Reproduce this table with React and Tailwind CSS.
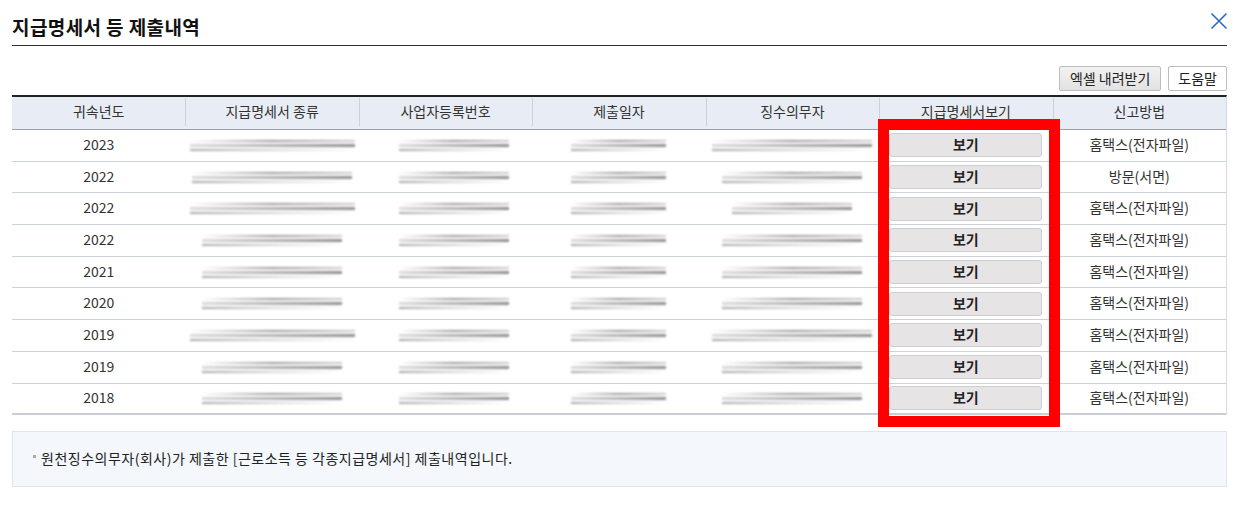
import React from "react";

const rows = [
  ["2023", "홈택스(전자파일)", [165, 110, 95, 160]],
  ["2022", "방문(서면)", [160, 110, 95, 140]],
  ["2022", "홈택스(전자파일)", [165, 110, 95, 120]],
  ["2022", "홈택스(전자파일)", [140, 110, 95, 140]],
  ["2021", "홈택스(전자파일)", [140, 110, 95, 140]],
  ["2020", "홈택스(전자파일)", [140, 110, 95, 140]],
  ["2019", "홈택스(전자파일)", [165, 110, 95, 160]],
  ["2019", "홈택스(전자파일)", [140, 110, 95, 140]],
  ["2018", "홈택스(전자파일)", [140, 110, 95, 140]],
];

function Smudge({ w }) {
  return (
    <div className="flex flex-col gap-[2px] blur-[1px] opacity-85" style={{ width: w }}>
      <div className="h-[2px] bg-gradient-to-r from-transparent via-[#8a8a8a] to-[#c4c4c4]" />
      <div className="h-[3px] bg-gradient-to-r from-[#d6d6d6] via-[#a5a5a5] to-[#7d7d7d]" />
      <div className="h-[2px] bg-gradient-to-r from-[#9a9a9a] via-[#cfcfcf] to-transparent" />
    </div>
  );
}

export default function App() {
  const font = { fontFamily: '"Noto Sans CJK KR", "Noto Sans", sans-serif' };
  return (
    <div className="relative w-[1239px] h-[509px] bg-white text-[#333]" style={font}>
      <div className="px-[12px]">
        <div className="flex items-center justify-between h-[46px] border-b border-[#333]">
          <h1 className="text-[19px] font-bold text-[#111] tracking-[0.4px] pt-[9px]">지급명세서 등 제출내역</h1>
          <svg width="18" height="18" viewBox="0 0 18 18" className="mr-[-1px] mt-[-4px]">
            <path d="M1.5 1.5 L16.5 16.5 M16.5 1.5 L1.5 16.5" stroke="#2b6cc4" strokeWidth="1.6" fill="none" />
          </svg>
        </div>

        <div className="flex justify-end gap-[7px] mt-[20px]">
          <button className="h-[25px] px-[10px] pb-[1px] text-[14px] text-[#222] border border-[#bdbdbd] bg-gradient-to-b from-[#f2f2f2] to-[#e2e2e2] rounded-[2px]">엑셀 내려받기</button>
          <button className="h-[25px] px-[9px] pb-[1px] text-[14px] text-[#222] border border-[#bdbdbd] bg-white rounded-[2px]">도움말</button>
        </div>

        <div className="mt-[4px] border-t-2 border-[#222] border-r border-r-[#d5dbe3]">
          <div className="grid grid-cols-7 h-[33px] bg-[#e8edf5] border-b border-b-[#9aa0a8] text-[14px] text-[#333]">
            {["귀속년도", "지급명세서 종류", "사업자등록번호", "제출일자", "징수의무자", "지급명세서보기", "신고방법"].map((h, i) => (
              <div key={h} className="relative flex items-center justify-center pb-[3px]">
                {i > 0 && <span className="absolute left-0 top-[1px] bottom-[3px] w-px bg-[#c9d1dc]" />}
                {h}
              </div>
            ))}
          </div>
          {rows.map(([y, m, ws], i) => (
            <div key={i} className={`grid grid-cols-7 h-[31.7px] text-[14px] text-[#333] ${i === rows.length - 1 ? "border-b-2 border-b-[#c8ced7]" : "border-b border-b-[#cdd3dc]"}`}>
              <div className="flex items-center justify-center pb-[2px]">{y}</div>
              <div className="flex items-center justify-center"><Smudge w={ws[0]} /></div>
              <div className="flex items-center justify-start pl-[40px]"><Smudge w={ws[1]} /></div>
              <div className="flex items-center justify-center"><Smudge w={ws[2]} /></div>
              <div className="flex items-center justify-center"><Smudge w={ws[3]} /></div>
              <div className="flex items-center justify-center">
                <button className="w-[153px] h-[24px] pb-[1px] text-[14px] font-bold text-[#222] bg-[#e6e4e4] border border-[#cfcfcf] rounded-[3px]">보기</button>
              </div>
              <div className="flex items-center justify-center pb-[2px]">{m}</div>
            </div>
          ))}
        </div>

        <div className="mt-[16px] h-[56px] bg-[#f4f7fb] border border-[#dfe5ed] flex items-center pl-[20px] pb-[2px] text-[14px] tracking-[0.5px] text-[#222]">
          <span className="w-[3px] h-[3px] bg-[#aaa] mr-[5px] mt-[-4px]" />
          원천징수의무자(회사)가 제출한 [근로소득 등 각종지급명세서] 제출내역입니다.
        </div>
      </div>

      <div className="absolute left-[878px] top-[119px] w-[182px] h-[308px] border-[11px] border-[#ff0000] pointer-events-none" />
    </div>
  );
}
